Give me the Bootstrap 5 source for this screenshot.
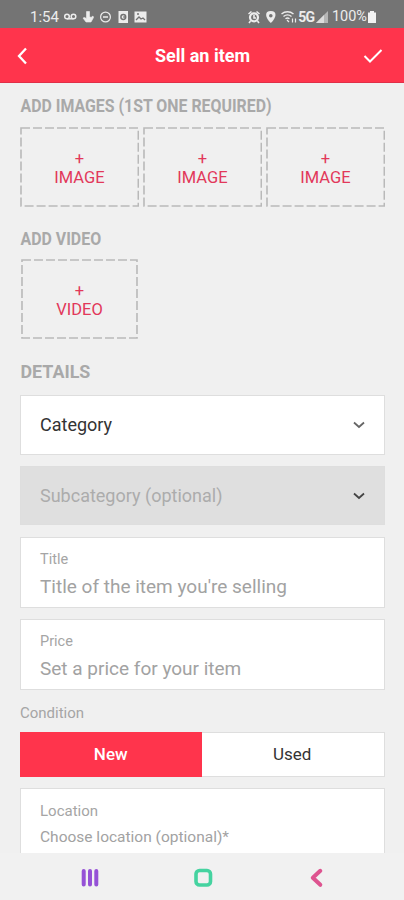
<!DOCTYPE html>
<html lang="en">
<head>
<meta charset="utf-8">
<meta name="viewport" content="width=device-width, initial-scale=1">
<title>Sell an item</title>
<link href="https://cdn.jsdelivr.net/npm/bootstrap@5.3.0/dist/css/bootstrap.min.css" rel="stylesheet">
<style>
body{font-family:Roboto,"Liberation Sans",sans-serif;background:#f0f0f0;color:#333;line-height:1}
.screen{height:900px;overflow:hidden}
.status{height:28px;background:#747474;color:#ececec;font-size:15px;padding:5px 27px 0 30px}
.status span{line-height:24px}
.status .net{font-size:14px;letter-spacing:-1px;margin-right:1px}
.status .pct{font-size:14.5px;margin-left:1px}
.status svg,.appbar svg,.keys svg,.field svg{display:block;flex:none}
.appbar{height:55px;background:#ff344c;color:#fff;border-bottom:1px solid #e02f48;padding:1px 21px 0 16px}
.appbar h1{font-size:18px;font-weight:700;line-height:20px;padding-left:12px}
.content{height:770px;padding:0 19px 0 20px;overflow:hidden}
.heading{font-size:18.5px;font-weight:700;line-height:22px;color:#a9a9a9;white-space:nowrap;transform-origin:0 50%;margin:0}
.h-images{margin-top:12px;transform:translateX(.5px) scaleX(.859)}
.h-video{margin-top:21px;transform:translateX(.5px) scaleX(.86)}
.h-details{margin-top:22px;transform:translateX(.5px) scaleX(.965)}
.tiles{margin-top:10px}
.tile{position:relative;height:80px;color:#e2385a;font-size:16.5px;line-height:19px;padding-top:22px;text-align:center}
.tile svg{position:absolute;inset:0;width:100%;height:100%}
.tile rect{fill:none;stroke:#b9b9b9;stroke-width:1.6;stroke-dasharray:9 3}
.video{width:117px;margin:9px 0 0 1px}
.field{background:#fff;border:1px solid #dedede;padding:0 19px}
.select{height:60px;font-size:18px;margin-top:12px}
.select.off{height:59px;background:#dfdfdf;color:#acacac;margin-top:11px}
.entry{height:71px;color:#a2a2a2;padding-top:14px;margin-top:12px}
.entry + .entry{margin-top:11px}
.cap{font-size:14.5px;line-height:16px;color:#a5a5a5}
.val{font-size:19px;line-height:24px;margin-top:7px;white-space:nowrap}
.condition{margin-top:15px;font-size:15px}
.seg{height:45px;font-size:17px;border:1px solid #dedede;background:#fff;margin-top:11px}
.seg .on{background:#ff344c;color:#fff;font-weight:500;margin:-1px 0 -1px -1px}
.place{height:80px;margin-top:11px}
.place .cap{font-size:15px}
.place .val{font-size:15.5px;margin-top:6px}
.keys{height:47px;background:#f1f1f1}
</style>
<script src="https://cdn.jsdelivr.net/npm/bootstrap@5.3.0/dist/js/bootstrap.bundle.min.js"></script>
</head>
<body>
<div class="screen d-flex flex-column">
  <div class="status d-flex justify-content-between">
    <div class="d-flex">
      <span>1:54</span>
      <svg width="92" height="24" viewBox="59 5 92 24" fill="none" stroke="#ececec" stroke-width="1.5">
        <circle cx="67" cy="16.500" r="2.300"/><circle cx="73.500" cy="16.500" r="2.300"/><path d="M67 18.800h6.500"/>
        <path d="M86.500 11.500h3v5l1.500 1 2-1.500.500 1.500-2.500 4.500h-5l-3-4 1.500-.500 2 1z" fill="#ececec" stroke-width=".6"/>
        <circle cx="105.500" cy="17" r="4.900" stroke-width="1.200"/><path d="M103 17h5"/>
        <path d="M118.500 11h9.500v12h-9.500z" fill="#ececec" stroke="none"/><circle cx="123.300" cy="17" r="2.400" stroke="#747474"/><path d="M123.300 17h2" stroke="#747474"/>
        <path d="M134.500 11.500h12v11h-12z" fill="#ececec" stroke="none"/><path d="M136 20l3-3 2 2 2-1 2 2M137 14h2" stroke="#747474" stroke-width="1.300"/>
      </svg>
    </div>
    <div class="d-flex">
      <svg width="50" height="24" viewBox="247 5 50 24" fill="none" stroke="#ececec" stroke-width="1.600">
        <circle cx="253" cy="17.300" r="4" stroke-width="2.200"/><path d="M247.500 14l3-2.500M258.500 14l-3-2.500M253 15v3h2M249.500 21l-1.500 2M256.500 21l1.500 2"/>
        <path d="M269.800 11c-6.500 0-6 6.500 0 12c6-5.500 6.500-12 0-12z" fill="#ececec" stroke="none"/><circle cx="269.800" cy="15.700" r="1.800" fill="#747474" stroke="none"/>
        <path d="M280.500 14c3.500-3 8.500-3 12 0M282.500 16.500c2.500-2 5.500-2 8 0M284.500 18.800c1.300-1 2.700-1 4 0" stroke-width="1.400"/><path d="M288 22l-2-2M291.500 22.500v-4M294.500 18.500v4" stroke-width="1.200"/>
      </svg>
      <span class="fw-bold net">5G</span>
      <svg width="16" height="24" viewBox="312 5 16 24"><path d="M313 23l12-12v12z" fill="#b5b5b5"/><path d="M313 23l8-8v8z" fill="#dcdcdc"/></svg>
      <span class="pct">100%</span>
      <svg width="10" height="24" viewBox="366 5 10 24"><path d="M369 11h4v1.500h2v10.500h-8v-10.500h2z" fill="#f2f2f2"/></svg>
    </div>
  </div>
  <header class="appbar d-flex align-items-center justify-content-between">
    <svg width="14" height="20" viewBox="0 0 14 20" fill="none" stroke="#fff" stroke-width="2.300"><path d="M10 2.500L3 10l7 7.500"/></svg>
    <h1 class="m-0">Sell an item</h1>
    <svg width="20" height="16" viewBox="0 0 20 16" fill="none" stroke="#fff" stroke-width="2"><path d="M1.500 8l5.500 5.500L18.500 2"/></svg>
  </header>
  <main class="content">
    <h2 class="heading h-images">ADD IMAGES (1ST ONE REQUIRED)</h2>
    <div class="d-flex gap-1 tiles">
      <div class="tile flex-fill"><svg><rect x="1" y="1" width="117.300" height="78"/></svg>+<br>IMAGE</div>
      <div class="tile flex-fill"><svg><rect x="1" y="1" width="117.300" height="78"/></svg>+<br>IMAGE</div>
      <div class="tile flex-fill"><svg><rect x="1" y="1" width="117.300" height="78"/></svg>+<br>IMAGE</div>
    </div>
    <h2 class="heading h-video">ADD VIDEO</h2>
    <div class="tile video"><svg><rect x="1" y="1" width="115" height="78"/></svg>+<br>VIDEO</div>
    <h2 class="heading h-details">DETAILS</h2>
    <div class="field select d-flex align-items-center justify-content-between"><span>Category</span>
      <svg width="12" height="8" viewBox="0 0 12 8" fill="none" stroke="#666" stroke-width="1.800"><path d="M1 1.500l5 4.500 5-4.500"/></svg></div>
    <div class="field select off d-flex align-items-center justify-content-between"><span>Subcategory (optional)</span>
      <svg width="12" height="8" viewBox="0 0 12 8" fill="none" stroke="#444" stroke-width="1.800"><path d="M1 1.500l5 4.500 5-4.500"/></svg></div>
    <div class="field entry"><div class="cap">Title</div><div class="val">Title of the item you're selling</div></div>
    <div class="field entry"><div class="cap">Price</div><div class="val">Set a price for your item</div></div>
    <div class="cap condition">Condition</div>
    <div class="seg d-flex text-center">
      <div class="on w-50 d-flex align-items-center justify-content-center">New</div>
      <div class="w-50 d-flex align-items-center justify-content-center">Used</div>
    </div>
    <div class="field entry place"><div class="cap">Location</div><div class="val">Choose location (optional)*</div></div>
  </main>
  <nav class="keys d-flex">
    <svg width="404" height="47" viewBox="0 853 404 47" fill="none" stroke-linecap="round" stroke-linejoin="round">
      <path d="M83.700 871v13.500M90 871v13.500M96.300 871v13.500" stroke="#9551d6" stroke-width="4"/>
      <rect x="196" y="870.500" width="14.500" height="14.500" rx="3.500" stroke="#45d3a0" stroke-width="3.600"/>
      <path d="M320.300 870.800l-7.500 7 7.500 7" stroke="#de5490" stroke-width="4"/>
    </svg>
  </nav>
</div>
</body>
</html>
